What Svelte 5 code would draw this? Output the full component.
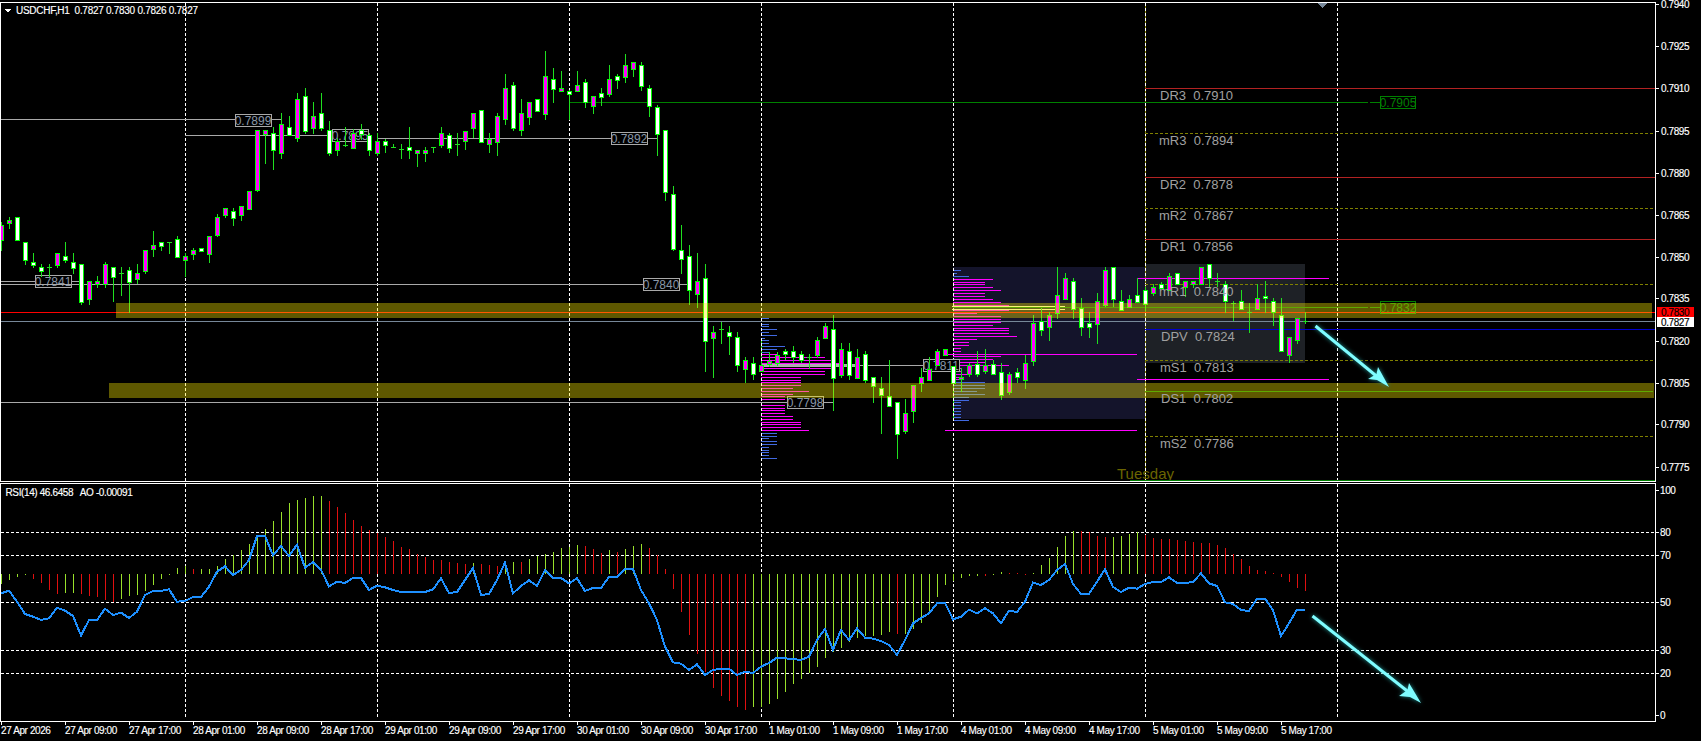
<script lang="ts">
  // all y values in the tables are "thirds of a pixel", the way they were read off the chart
  const X = (i: number) => 1 + 8 * i;
  const T = (v: number) => Math.round(v / 3);

  // type, wick top, body top, body bottom, wick bottom
  const candles: [string, number, number, number, number][] = [
    ['m',665,675,720,753],['m',650,660,668,688],['w',652,652,720,720],['w',727,727,780,795],['w',760,786,795,805],
    ['w',792,802,813,830],['d',792,802,802,830],['m',760,760,795,804],['w',727,768,780,788],['w',760,786,804,822],
    ['w',792,792,905,915],['m',843,843,897,915],['m',828,843,853,864],['m',786,792,853,864],['w',802,802,830,906],
    ['d',802,820,820,888],['w',802,811,845,938],['m',792,820,837,853],['m',750,750,813,822],['m',693,736,746,770],
    ['w',727,727,737,753],['d',727,727,727,762],['w',708,718,770,770],['m',760,768,780,830],['m',745,750,762,780],
    ['w',744,744,752,752],['m',708,708,762,788],['m',643,652,705,712],['m',625,625,645,655],['w',625,634,653,678],
    ['m',619,619,644,663],['m',574,574,626,626],['m',391,391,570,576],['m',391,391,402,492],['w',382,400,450,510],
    ['m',340,373,458,478],['w',348,382,406,406],['m',280,298,415,426],['w',264,289,392,402],['m',306,349,383,402],
    ['w',280,340,383,392],['w',363,391,458,468],['m',415,424,450,468],['d',382,434,434,442],['m',388,400,443,443],
    ['w',372,391,401,420],['w',400,406,450,468],['m',400,424,458,468],['w',418,424,434,459],['d',432,442,442,443],
    ['d',432,448,448,477],['w',382,442,449,477],['m',449,449,458,500],['m',442,449,458,486],['d',442,442,442,459],
    ['m',382,400,434,443],['w',400,406,443,459],['d',400,433,433,468],['m',392,392,424,450],['m',340,340,383,415],
    ['w',331,331,425,425],['m',400,416,433,459],['m',340,349,425,468],['m',222,265,358,375],['w',247,256,383,392],
    ['m',297,340,391,408],['m',307,307,350,375],['w',298,298,332,332],['m',153,229,342,360],['w',205,238,266,309],
    ['m',213,265,273,273],['w',270,272,282,360],['m',213,256,272,272],['w',238,247,307,324],['m',289,289,317,342],
    ['w',264,280,290,318],['m',195,238,282,291],['w',222,229,239,267],['m',162,196,230,249],['m',187,187,206,231],
    ['w',186,196,257,273],['w',255,265,317,351],['w',316,322,401,468],['w',391,391,575,603],['w',558,583,746,753],
    ['w',675,751,778,822],['w',735,769,870,915],['m',759,844,882,924],['w',792,835,1022,1116],['m',979,997,1013,1134],
    ['d',965,988,988,1032],['w',979,997,1007,1065],['w',997,1012,1096,1116],['m',1071,1081,1106,1150],['w',1071,1090,1123,1140],
    ['m',1090,1096,1114,1114],['m',1055,1082,1092,1100],['m',1055,1064,1090,1098],['w',1046,1054,1063,1081],['w',1038,1054,1072,1090],
    ['w',1054,1063,1081,1090],['d',1063,1072,1072,1106],['m',1011,1021,1065,1074],['m',970,979,1013,1013],['w',945,988,1133,1233],
    ['m',1030,1048,1124,1133],['w',1030,1054,1124,1140],['m',1047,1072,1133,1133],['w',1054,1063,1139,1150],['w',1132,1132,1157,1209],
    ['w',1131,1165,1184,1302],['w',1080,1189,1217,1217],['w',1207,1207,1301,1377],['m',1198,1240,1292,1302],['m',1156,1156,1232,1269],
    ['m',1105,1132,1148,1176],['m',1071,1107,1139,1139],['m',1047,1054,1096,1096],['m',1048,1048,1064,1064],['w',1098,1098,1148,1148],
    ['m',1105,1132,1138,1175],['m',1090,1095,1123,1132],['w',1054,1091,1123,1132],['m',1047,1096,1114,1123],['w',1080,1091,1123,1123],
    ['w',1090,1115,1185,1200],['m',1115,1123,1176,1185],['w',1105,1115,1132,1150],['m',1065,1090,1140,1167],['m',945,970,1082,1098],
    ['w',925,964,990,1008],['m',935,946,981,1023],['m',801,886,938,956],['m',819,835,897,897],['w',835,844,928,957],
    ['w',895,924,980,1008],['w',935,970,980,1014],['m',879,904,971,1032],['m',801,811,914,922],['w',802,802,896,920],
    ['w',870,904,929,932],['m',885,896,922,925],['w',835,886,906,906],['w',860,871,913,934],['m',853,862,880,887],
    ['w',845,853,863,865],['m',819,828,870,870],['w',820,820,853,853],['m',842,844,862,890],['m',844,844,853,863],
    ['m',802,802,853,853],['w',793,793,835,862],['d',819,844,844,862],['w',844,853,904,938],['d',904,910,910,963],
    ['w',871,904,928,928],['d',910,937,937,998],['m',853,895,928,928],['w',844,887,895,938],['w',895,904,937,979],
    ['w',895,946,1054,1054],['m',1012,1012,1064,1090],['m',955,955,1021,1031],['d',937,963,963,971]
  ];

  // awesome oscillator: read as [end y, colour]; baseline sits at 281
  const aoTop: [number, string][] = ([
    '312g 299g 290g 285g 297r 308r 330r 342r 340g 340g 342r 347r 352r 360r 365r 356g 349g 345g 333g 315g 297g 282g 263g 258g',
    '266r 266g 266g 258g 237g 225g 210g 192g 165g 147g 123g 96g 69g 60g 54g 48g 48g 63r 81r 99r 120r 138r 150r 158r',
    '171r 183r 201r 207r 222r 231r 240r 240r 246r 249r 252r 249g 252r 255r 258r 246g 246g 246r 237g 227g 222g 216g 204g 201g',
    '195g 198r 207r 219r 210g 216r 207g 198g 192g 204r 225r 267r 327r 396r 465r 522r 575r 624r 648r 663r 681r 690r 681g 681g',
    '672g 657g 636g 612g 597g 580g 561g 534g 517g 504g 486g 474g 468g 467g 465g 456g 461r 462g 447g 430g 399g 351g 315g 303g',
    '294g 288g 288g 288r 282g 276g 280r 280r 285r 278g 255g 234g 201g 168g 153g 153r 156r 168r 171r 171g 168g 162g 157g 165r',
    '174r 177r 177r 180r 183r 186r 189r 189r 195r 204r 222r 237r 258r 270r 273r 279r 291r 306r 324r 333r'
  ].join(' ').split(' ').map((s) => [parseInt(s), s.slice(-1)]) as [number, string][]);

  const rsi = [
    340,332,365,402,410,420,415,383,392,408,466,420,420,386,405,398,414,395,345,333,333,328,365,363,
    351,351,320,275,259,285,270,240,168,168,226,198,228,194,263,246,270,319,305,309,294,294,330,317,
    322,330,336,336,336,336,328,295,339,336,300,264,345,342,300,248,340,318,301,318,270,294,294,310,
    295,333,324,324,291,291,267,267,330,370,420,500,547,551,570,553,585,570,566,566,585,575,579,560,
    549,533,535,537,540,530,480,447,510,450,480,445,473,476,483,495,525,480,430,414,400,370,368,418,
    410,389,400,385,400,430,392,396,365,308,315,300,270,252,312,342,342,305,268,321,336,323,326,312,
    306,306,292,309,309,306,280,310,318,367,372,390,393,356,356,390,468,430,389,389
  ];

  const rsiPoints = rsi.map((v, i) => `${X(i)},${480 + v / 3}`).join(' ');

  // volume profile rows: length in bars (8px), b = blue, m = magenta
  const parseProfile = (s: string) => s.split(' ').map((r) => [parseFloat(r), r.slice(-1)] as [number, string]);
  const profile1 = parseProfile(
    '1b 0.4b 1b 1b 2b 1b 2b 0.5b 1b 1b 3b 2b 1b 2m 8m 9m 10m 12m 9m 8m 8m 5m 5m 5m 5m 4m 6m 4m 3m 3m 2.5m 3m 3m 3m 3m 4m 4m 5m 5m 5m 6m 2b 2b 1b 2b 2b 1b 1b 1b 1b 2b'
  );
  const profile2 = parseProfile(
    '1b 0.5b 2b 5m 4m 4m 5m 6m 4m 4m 5m 6m 7m 14m 7m 3m 6m 6m 6m 5m 7m 7m 7m 8m 3m 2m 2m 1m 1m 1m 6m 5m 4m 7m 1m 1m 2m 1m 1m 4b 4b 4b 3b 4b 2b 2b 1b 1b 1b 1b 1b 1b 2b'
  );

  const priceTicks = [
    ['0.7940',4],['0.7925',46],['0.7910',88],['0.7895',131],['0.7880',173],['0.7865',215],
    ['0.7850',257],['0.7835',298],['0.7820',341],['0.7805',383],['0.7790',424],['0.7775',467]
  ] as [string, number][];

  const rsiLevels = [[80,532],[70,555],[50,602],[30,650],[20,673]];
  const rsiTicks = [[100,490],[80,532],[70,555],[50,602],[30,650],[20,673],[0,715]];

  const grid = [185,377,569,761,953,1145,1337];

  const times = ['27 Apr 2026','27 Apr 09:00','27 Apr 17:00','28 Apr 01:00','28 Apr 09:00','28 Apr 17:00','29 Apr 01:00','29 Apr 09:00','29 Apr 17:00',
    '30 Apr 01:00','30 Apr 09:00','30 Apr 17:00','1 May 01:00','1 May 09:00','1 May 17:00','4 May 01:00','4 May 09:00','4 May 17:00','5 May 01:00','5 May 09:00','5 May 17:00'];

  // price labels sitting on the grey/green trend lines: [x1, x2, y, boxX, boxY, text]
  const tagged = [
    [0,282,119,235,114,'0.7899'],
    [185,369,135,332,129,'0.7895'],
    [377,657,138,611,132,'0.7892'],
    [0,82,281,35,275,'0.7841'],
    [0,690,284,643,278,'0.7840'],
    [0,834,402,787,396,'0.7798'],
    [761,960,365,923,359,'0.7811']
  ] as [number, number, number, number, number, string][];

  const pivots = [
    ['DR3  0.7910',1160,100],['mR3  0.7894',1159,145],['DR2  0.7878',1160,189],['mR2  0.7867',1159,220],
    ['DR1  0.7856',1160,251],['mR1  0.7840',1159,296],['DPV  0.7824',1161,341],['mS1  0.7813',1160,372],
    ['DS1  0.7802',1161,403],['mS2  0.7786',1160,448]
  ] as [string, number, number][];

  const redLevels = [88,177,239];
  const dashLevels = [133,208,284,360,436];
</script>

<div class="terminal">
  <div class="row main-row">
    <svg class="plot" width="1656" height="480" viewBox="0 2 1656 480">
      <rect class="zone-navy" x="953" y="267" width="192" height="152" />
      <rect class="zone-grey" x="1145" y="264" width="160" height="99" />

      {#each profile1 as [len, kind], k}
        <rect class={kind === 'b' ? 'vp-blue' : 'vp-mag'} x="761" y={318 + k * 2.8} width={len * 8} height="1" />
      {/each}
      {#each profile2 as [len, kind], k}
        <rect class={kind === 'b' ? 'vp-blue' : 'vp-mag'} x="953" y={270 + k * 2.88} width={len * 8} height="1" />
      {/each}
      <rect class="poc" x="761" y="364" width="94" height="3" />
      <rect class="poc-pale" x="952" y="306" width="113" height="1" />
      <rect class="poc-pale" x="952" y="309" width="113" height="1" />
      <rect class="wick" x="953" y="366" width="1" height="53" />
      <rect class="wick" x="761" y="340" width="1" height="30" />

      {#each grid as x}
        {#if x === 1145}<line class="olive-solid" x1={x + 0.5} x2={x + 0.5} y1="3" y2="481" />{/if}
        <line class="dots" x1={x + 0.5} x2={x + 0.5} y1="3" y2="481" />
      {/each}

      {#each redLevels as y}
        <line class="level-red" x1="1145" x2="1655" y1={y + 0.5} y2={y + 0.5} />
      {/each}
      {#each dashLevels as y}
        <line class="level-dash" x1="1145" x2="1655" y1={y + 0.5} y2={y + 0.5} />
      {/each}

      <line class="price-red" x1="1" x2="1655" y1="312.5" y2="312.5" />
      <line class="price-bid" x1="1" x2="1655" y1="321.5" y2="321.5" />
      <line class="level-blue" x1="1145" x2="1655" y1="329.5" y2="329.5" />
      <line class="level-green" x1="1145" x2="1653" y1="391.5" y2="391.5" />

      <line class="level-green" x1="569" x2="1368" y1="102.5" y2="102.5" />
      <line class="level-green" x1="1370" x2="1380" y1="102.5" y2="102.5" />
      <line class="level-green" x1="953" x2="1368" y1="307.5" y2="307.5" />
      <line class="level-green" x1="1370" x2="1380" y1="307.5" y2="307.5" />
      <rect class="tag-green" x="1380.5" y="96.5" width="35" height="12" />
      <text class="tag-text green" x="1398" y="106.5">0.7905</text>
      <rect class="tag-green" x="1380.5" y="301.5" width="35" height="12" />
      <text class="tag-text green" x="1398" y="311.5">0.7832</text>

      <line class="level-mag" x1="945" x2="1137" y1="354.5" y2="354.5" />
      <line class="level-mag" x1="945" x2="1137" y1="430.5" y2="430.5" />
      <line class="level-mag" x1="1137" x2="1329" y1="278.5" y2="278.5" />
      <line class="level-mag" x1="1137" x2="1329" y1="379.5" y2="379.5" />

      {#each tagged as [x1, x2, y, bx, by, label]}
        <line class="trend" {x1} {x2} y1={y + 0.5} y2={y + 0.5} />
        <rect class="tag-grey" x={bx + 0.5} y={by + 0.5} width="36" height="12" />
        <text class="tag-text grey" x={bx + 18} y={by + 10.5}>{label}</text>
      {/each}

      {#each candles as [kind, hi, top, bot, lo], i}
        <rect class="wick" x={X(i)} y={T(hi)} width="1" height={Math.max(1, T(lo) - T(hi))} />
        {#if kind === 'd'}
          <rect class="wick" x={X(i) - 2} y={T(top)} width="5" height="1" />
        {:else}
          <rect class={kind === 'w' ? 'body-white' : 'body-mag'} x={X(i) - 1.5} y={T(top) + 0.5} width="4" height={Math.max(1, T(bot) - T(top))} />
        {/if}
      {/each}

      <rect class="band" x="116" y="303" width="1536" height="15" />
      <rect class="band" x="109" y="383" width="1545" height="15" />

      {#each pivots as [label, x, y]}
        <text class="pivot" {x} {y} xml:space="preserve">{label}</text>
      {/each}
      <text class="day" x="1117" y="479">Tuesday</text>

      <line class="level-green" x1="1130" x2="1655" y1="480.5" y2="480.5" />

      <polygon class="shift" points="1317,3 1327,3 1322,8" />
      <polygon class="head-mark" points="4,9 11,9 7.5,12.5" />
      <text class="chart-title" x="16" y="14" xml:space="preserve">USDCHF,H1  0.7827 0.7830 0.7826 0.7827</text>

      <g class="arrow">
        <line x1="1315.5" y1="326" x2="1380" y2="379" />
        <polygon points="1389,387 1378,367 1376.5,374 1368,379 1377,380" />
      </g>

      <line class="frame" x1="0" x2="1656" y1="2.5" y2="2.5" />
      <line class="frame" x1="0" x2="1656" y1="481.5" y2="481.5" />
      <line class="frame" x1="0.5" x2="0.5" y1="2" y2="482" />
      <line class="frame" x1="1655.5" x2="1655.5" y1="2" y2="482" />
    </svg>
    <svg class="axis" width="45" height="480" viewBox="1656 2 45 480">
      {#each priceTicks as [label, y]}
        <line class="frame" x1="1656" x2="1659" y1={y + 0.5} y2={y + 0.5} />
        <text class="axis-text" x="1661" y={y + 4}>{label}</text>
      {/each}
      <rect class="bid-red" x="1657" y="307" width="37" height="10" />
      <text class="axis-text dark" x="1661" y="315.5">0.7830</text>
      <rect class="bid-white" x="1657" y="317" width="37" height="10" />
      <text class="axis-text dark" x="1661" y="325.5">0.7827</text>
    </svg>
  </div>

  <div class="row sub-row">
    <svg class="plot" width="1656" height="239" viewBox="0 483 1656 239">
      {#each rsiLevels as [, y]}
        <line class="dots" x1="1" x2="1655" y1={y + 0.5} y2={y + 0.5} />
      {/each}
      {#each grid as x}
        <line class="dots" x1={x + 0.5} x2={x + 0.5} y1="484" y2="719" />
      {/each}
      {#each aoTop as [end, colour], i}
        <rect class={colour === 'g' ? 'ao-up' : 'ao-down'} x={X(i)} y={480 + Math.min(end, 281) / 3} width="1" height={Math.max(1, Math.abs(end - 281) / 3)} />
      {/each}
      <polyline class="rsi-line" points={rsiPoints} />
      <text class="chart-title rsi-title" x="5.5" y="496" xml:space="preserve">RSI(14) 46.6458   AO -0.00091</text>
      <g class="arrow">
        <line x1="1312.5" y1="616" x2="1411" y2="694" />
        <polygon points="1421,703 1409,683 1407.5,690 1399,696 1410,697" />
      </g>
      <line class="frame" x1="0" x2="1656" y1="483.5" y2="483.5" />
      <line class="frame" x1="0" x2="1656" y1="721.5" y2="721.5" />
      <line class="frame" x1="0.5" x2="0.5" y1="483" y2="722" />
      <line class="frame" x1="1655.5" x2="1655.5" y1="483" y2="722" />
    </svg>
    <svg class="axis" width="45" height="239" viewBox="1656 483 45 239">
      {#each rsiTicks as [label, y]}
        <line class="frame" x1="1656" x2="1659" y1={y + 0.5} y2={y + 0.5} />
        <text class="axis-text" x="1660" y={y + 4}>{label}</text>
      {/each}
    </svg>
  </div>

  <svg class="times" width="1701" height="19" viewBox="0 722 1701 19">
    {#each times as label, k}
      <line class="frame" x1={X(k * 8) + 0.5} x2={X(k * 8) + 0.5} y1="722" y2="725" />
      <text class="axis-text" x={X(k * 8)} y="734">{label}</text>
    {/each}
  </svg>
</div>

<style>
  :global(body) {
    margin: 0;
    background: #000;
  }

  .terminal {
    display: flex;
    flex-direction: column;
    width: 1701px;
    height: 741px;
    padding-top: 2px;
    box-sizing: border-box;
    background: #000;
    overflow: hidden;
    font-family: "Liberation Sans", Arial, sans-serif;
  }

  .row {
    display: flex;
  }

  .main-row {
    margin-bottom: 1px;
  }

  svg {
    display: block;
    flex: none;
  }

  .axis {
    overflow: visible;
  }

  rect, line, polygon {
    shape-rendering: crispEdges;
  }

  .frame { stroke: #fff; stroke-width: 1; }
  .dots { stroke: #fff; stroke-width: 1; stroke-dasharray: 3 2; }
  .olive-solid { stroke: #808000; stroke-width: 1; }

  .zone-navy { fill: #14142b; }
  .zone-grey { fill: #1e2126; }
  .vp-blue { fill: #4169e1; }
  .vp-mag { fill: #ff00ff; }
  .poc { fill: #b0b0b0; }
  .poc-pale { fill: #f5f5c0; }

  .wick { fill: #1fe01f; }
  .body-white { fill: #fff; stroke: #00ff00; stroke-width: 1; }
  .body-mag { fill: #ff00ff; stroke: #00ff00; stroke-width: 1; }
  .band { fill: #ffee00; fill-opacity: 0.37; }

  .level-red { stroke: #b22222; stroke-width: 1; }
  .level-dash { stroke: #808000; stroke-width: 1; stroke-dasharray: 3 2; }
  .level-blue { stroke: #0000cd; stroke-width: 1; }
  .level-green { stroke: #008000; stroke-width: 1; }
  .level-mag { stroke: #ff00ff; stroke-width: 1; }
  .price-red { stroke: #ff0000; stroke-width: 1; }
  .price-bid { stroke: #778899; stroke-width: 1; }
  .trend { stroke: #a9a9a9; stroke-width: 1; }

  .tag-grey { fill: #000; stroke: #a9a9a9; stroke-width: 1; }
  .tag-green { fill: none; stroke: #008000; stroke-width: 1; }

  .tag-text {
    font-size: 12px;
    text-anchor: middle;
  }
  .tag-text.grey { fill: #8a97a8; }
  .tag-text.green { fill: #008000; }

  .pivot {
    font-size: 13px;
    fill: #a0a0a0;
    white-space: pre;
  }

  .day {
    font-size: 15px;
    fill: #6b6500;
  }

  .chart-title {
    font-size: 10px;
    letter-spacing: -0.28px;
    fill: #fff;
    stroke: #fff;
    stroke-width: 0.15px;
    white-space: pre;
  }
  .rsi-title {
    letter-spacing: -0.38px;
  }

  .axis-text {
    font-size: 10px;
    letter-spacing: -0.4px;
    fill: #fff;
    stroke: #fff;
    stroke-width: 0.15px;
  }
  .axis-text.dark { fill: #000; stroke: #000; }

  .bid-red { fill: #ff0000; }
  .bid-white { fill: #fff; }

  .shift { fill: #778899; }
  .head-mark { fill: #fff; }

  .ao-up { fill: #98e02a; }
  .ao-down { fill: #e01010; }

  .rsi-line {
    fill: none;
    stroke: #1e90ff;
    stroke-width: 2;
    stroke-linejoin: miter;
    shape-rendering: crispEdges;
  }

  .arrow {
    filter: drop-shadow(0 0 2px #1f8f8f);
  }
  .arrow line {
    stroke: #7ffcff;
    stroke-width: 3;
    shape-rendering: auto;
  }
  .arrow polygon {
    fill: #7ffcff;
    shape-rendering: auto;
  }
</style>
